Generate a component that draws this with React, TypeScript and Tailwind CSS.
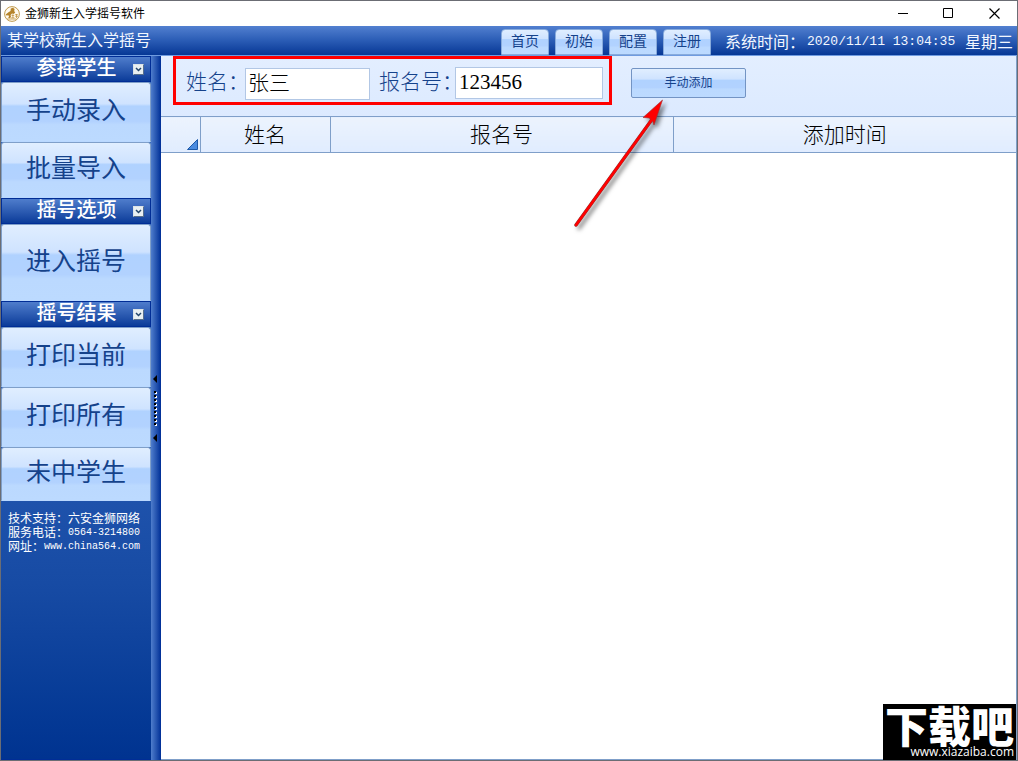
import { useState } from 'react';

const groups = [
  {
    title: '参摇学生',
    items: [
      { label: '手动录入', height: 'h-[60px]' },
      { label: '批量导入', height: 'h-14' },
    ],
  },
  { title: '摇号选项', items: [{ label: '进入摇号', height: 'h-[77px]' }] },
  {
    title: '摇号结果',
    items: [
      { label: '打印当前', height: 'h-[60px]' },
      { label: '打印所有', height: 'h-[60px]' },
      { label: '未中学生', height: 'h-[54px]' },
    ],
  },
];

const navItems = ['首页', '初始', '配置', '注册'];

// shared glossy fill of every raised button
const shine = 'bg-[linear-gradient(to_bottom,#e0eeff_0%,#cfe3ff_36%,#b0d2ff_40%,#b2d2ff_66%,#bbd9ff_72%,#bcdaff_100%)]';

function LionIcon() {
  return (
    <svg width="16" height="16" viewBox="0 0 16 16" fill="none" aria-hidden="true">
      <circle cx="8" cy="8" r="7.4" fill="#fffaf0" stroke="#b98f3c" strokeWidth="0.9" />
      <path d="M4.5 6.2 6.5 5l.3-2.6L9 1.7l1.6 1.4-.4 2 1 1.7L9.4 8 8 7.6 6.6 9 7 11l-1.2 1.3-1.6-.2L5 10.6l-.6-1.4-2 .4-.7-1.2z" fill="#b5842c" />
      <path d="M7.6 9.4h2.6M8.9 8.4v3.4M7.2 11.8h3.2M11.2 8.6h2.6M12.5 8v4M11.2 10.3h2.8M3 13h9.4" stroke="#c09443" strokeWidth="0.8" />
    </svg>
  );
}

function TitleBar() {
  return (
    <header className="flex h-[25px] items-center justify-between bg-white pl-[3px]">
      <div className="flex items-center gap-[5px]">
        <LionIcon />
        <span className="pb-0.5 text-xs text-black">金狮新生入学摇号软件</span>
      </div>
      <div className="flex text-black">
        <button aria-label="最小化" className="flex h-6 w-[45px] items-center justify-center">
          <svg width="11" height="11" viewBox="0 0 11 11" stroke="currentColor">
            <path d="M0 5.5h10" />
          </svg>
        </button>
        <button aria-label="最大化" className="flex h-6 w-[45px] items-center justify-center">
          <svg width="11" height="11" viewBox="0 0 11 11" fill="none" stroke="currentColor">
            <path d="M.5.5h9v9h-9z" />
          </svg>
        </button>
        <button aria-label="关闭" className="flex h-6 w-[46px] items-center justify-center">
          <svg width="11" height="11" viewBox="0 0 11 11" stroke="currentColor" strokeWidth="1.2">
            <path d="m.5.5 10 10m0-10-10 10" />
          </svg>
        </button>
      </div>
    </header>
  );
}

function TopBar() {
  return (
    <div className="flex h-[30px] items-center justify-between border-b border-[#6f9be0] bg-linear-to-b from-[#5280d0] via-[#2a5cb5] to-[#063795] pr-1 pl-1.5 text-base text-[#f2f7ff]">
      <h1 className="pb-1 leading-6">某学校新生入学摇号</h1>
      <div className="flex items-end self-end">
        <nav className="flex gap-1.5">
          {navItems.map((item) => (
            <button
              key={item}
              className={`${shine} h-[26px] w-12 rounded-t-sm border border-[#88abdc] pb-1 text-sm leading-5 text-[#15428b]`}
            >
              {item}
            </button>
          ))}
        </nav>
        <p className="ml-3.5 flex h-[26px] items-center pb-0.5 whitespace-pre">
          系统时间：
          <span className="mx-0.5 pt-0.5 font-['Liberation_Mono',monospace] text-[13px]">2020/11/11 13:04:35 </span>
          星期三
        </p>
      </div>
    </div>
  );
}

function Sidebar() {
  const [closed, setClosed] = useState<string[]>([]);

  const toggle = (title: string) => {
    setClosed(closed.includes(title) ? closed.filter((t) => t !== title) : [...closed, title]);
  };

  return (
    <aside className="flex w-[150px] shrink-0 flex-col border-b border-[#002d96] bg-linear-to-b from-[#2b60ba] from-40% via-[#174ba4] via-75% to-[#003390]">
      {groups.map((group) => (
        <section key={group.title}>
          <div className="flex h-[26px] items-center border border-[#002d96] bg-linear-to-b from-[#4f7dcc] to-[#0a3b99] pr-1.5">
            <h2 className="flex-1 pb-1 pl-[18px] text-center text-xl leading-5 font-medium text-white">{group.title}</h2>
            <button
              onClick={() => toggle(group.title)}
              aria-label={`折叠${group.title}`}
              className="flex size-[11px] items-center justify-center border border-[#dbe4e8] border-r-[#58708c] border-b-[#58708c] bg-[#e9f0f2]"
            >
              <svg width="7" height="5" viewBox="0 0 7 5" fill="none" stroke="#24466c" strokeWidth="1.5">
                <path d="m1 1 2.5 2.5L6 1" />
              </svg>
            </button>
          </div>
          {!closed.includes(group.title) &&
            group.items.map((item) => (
              <button
                key={item.label}
                className={`${item.height} ${shine} block w-full rounded-t-[3px] border border-[#7f9fc9] border-b-[#b9d8ff] pb-1.5 text-[25px] text-[#15428b]`}
              >
                {item.label}
              </button>
            ))}
        </section>
      ))}
      <address className="px-[7px] pt-2.5 text-xs leading-[14px] whitespace-nowrap text-white not-italic">
        <p className="flex items-center">技术支持：六安金狮网络</p>
        <p className="flex items-center">
          服务电话：<span className="pt-0.5 font-['Liberation_Mono',monospace] text-[10px] leading-3">0564-3214800</span>
        </p>
        <p className="flex items-center">
          网址：
          <a href="http://www.china564.com" className="pt-0.5 font-['Liberation_Mono',monospace] text-[10px] leading-3">
            www.china564.com
          </a>
        </p>
      </address>
    </aside>
  );
}

function Splitter() {
  return (
    <div className="flex w-2.5 shrink-0 flex-col items-start justify-center gap-2 bg-linear-to-r from-[#4f7dcc] to-[#002d96] pl-0.5">
      <svg width="4" height="8" viewBox="0 0 4 8">
        <path d="M4 0v8L0 4z" fill="#000" />
      </svg>
      <svg width="4" height="35" viewBox="0 0 4 35">
        <path d="M3 1v34" stroke="#fff" strokeWidth="2" strokeDasharray="2 2" />
        <path d="M2 0v35" stroke="#000" strokeWidth="2" strokeDasharray="2 2" />
      </svg>
      <svg width="4" height="8" viewBox="0 0 4 8">
        <path d="M4 0v8L0 4z" fill="#000" />
      </svg>
    </div>
  );
}

function StudentForm() {
  const [name, setName] = useState('张三');
  const [number, setNumber] = useState('123456');

  return (
    <form onSubmit={(e) => e.preventDefault()} className="relative flex h-[60px] items-start bg-linear-to-b from-[#e3eeff] to-[#dceaff] pl-3">
      <div className="flex h-[49px] items-center border-3 border-[#ff0000] pr-1.5 pl-2.5 text-[21px] text-[#15428b]">
        <label htmlFor="name" className="-mr-1 font-light whitespace-nowrap">
          姓名：
        </label>
        <input
          id="name"
          value={name}
          onChange={(e) => setName(e.target.value)}
          className="relative mt-1.5 h-8 w-[125px] border border-[#b2c7e5] bg-white px-0.5 pb-1.5 font-light text-black outline-none"
        />
        <label htmlFor="number" className="-mr-2 ml-[9px] font-light whitespace-nowrap">
          报名号：
        </label>
        <input
          id="number"
          value={number}
          onChange={(e) => setNumber(e.target.value)}
          className="relative mt-1 h-8 w-[148px] border border-[#b2c7e5] bg-white px-[3px] font-['Liberation_Serif',serif] text-black outline-none"
        />
      </div>
      <button className={`${shine} mt-3 ml-[19px] h-[30px] w-[115px] rounded-xs border border-[#7394c4] pb-0.5 text-xs text-[#15428b]`}>
        手动添加
      </button>
      {/* pointer from the table to the add button */}
      <svg width="110" height="140" viewBox="0 0 110 140" className="pointer-events-none absolute top-10 left-[406px] drop-shadow-[3px_3px_2px_rgba(0,0,0,0.5)]">
        <path d="M9 129 86 22" stroke="#833" strokeWidth="3.4" strokeLinecap="round" />
        <path d="M95.500 4 76 21.500l6 .5 3.500 2.500 1.500 4.500z" fill="#f00" stroke="#933" strokeWidth="0.6" />
        <path d="M9 129 86 22" stroke="#f00" strokeWidth="2.6" strokeLinecap="round" />
      </svg>
    </form>
  );
}

function StudentTable() {
  const th = 'border border-[#7f9fc9] bg-linear-to-b from-[#ecf3fd] to-[#e0ecff] font-light';

  return (
    <table className="w-full table-fixed border-collapse text-[21px] text-black">
      <colgroup>
        <col className="w-[39px]" />
        <col className="w-[130px]" />
        <col />
        <col />
      </colgroup>
      <thead>
        <tr className="h-9">
          <th aria-label="全选" className={`${th} border-l-0 p-0 align-bottom`}>
            <svg width="11" height="11" viewBox="0 0 11 11" className="mr-0.5 mb-0.5 ml-auto">
              <path d="M10.5.5v10H.5z" fill="#4a8be0" stroke="#1d59a8" />
            </svg>
          </th>
          <th className={`${th} p-0 pb-1 leading-7`}>姓名</th>
          <th className={`${th} p-0 pb-1 leading-7`}>报名号</th>
          <th className={`${th} border-r-0 p-0 pb-1 leading-7`}>添加时间</th>
        </tr>
      </thead>
      <tbody />
    </table>
  );
}

function Watermark() {
  return (
    <a href="http://www.xiazaiba.com" className="absolute right-px bottom-0 flex w-[133px] flex-col items-center bg-black text-white">
      <span className="text-[43px] leading-10 font-black">下载吧</span>
      <span className="self-end pr-0.5 font-['Open_Sans',sans-serif] text-xs leading-4">www.xiazaiba.com</span>
    </a>
  );
}

export default function App() {
  return (
    <div className="relative flex min-h-screen flex-col border border-[#6b6d74] bg-white font-['Noto_Sans_CJK_SC',sans-serif]">
      <TitleBar />
      <TopBar />
      <div className="flex flex-1">
        <Sidebar />
        <Splitter />
        <main className="min-w-0 flex-1 border-r border-b border-[#7f9fc9] bg-white">
          <StudentForm />
          <StudentTable />
        </main>
      </div>
      <Watermark />
    </div>
  );
}
